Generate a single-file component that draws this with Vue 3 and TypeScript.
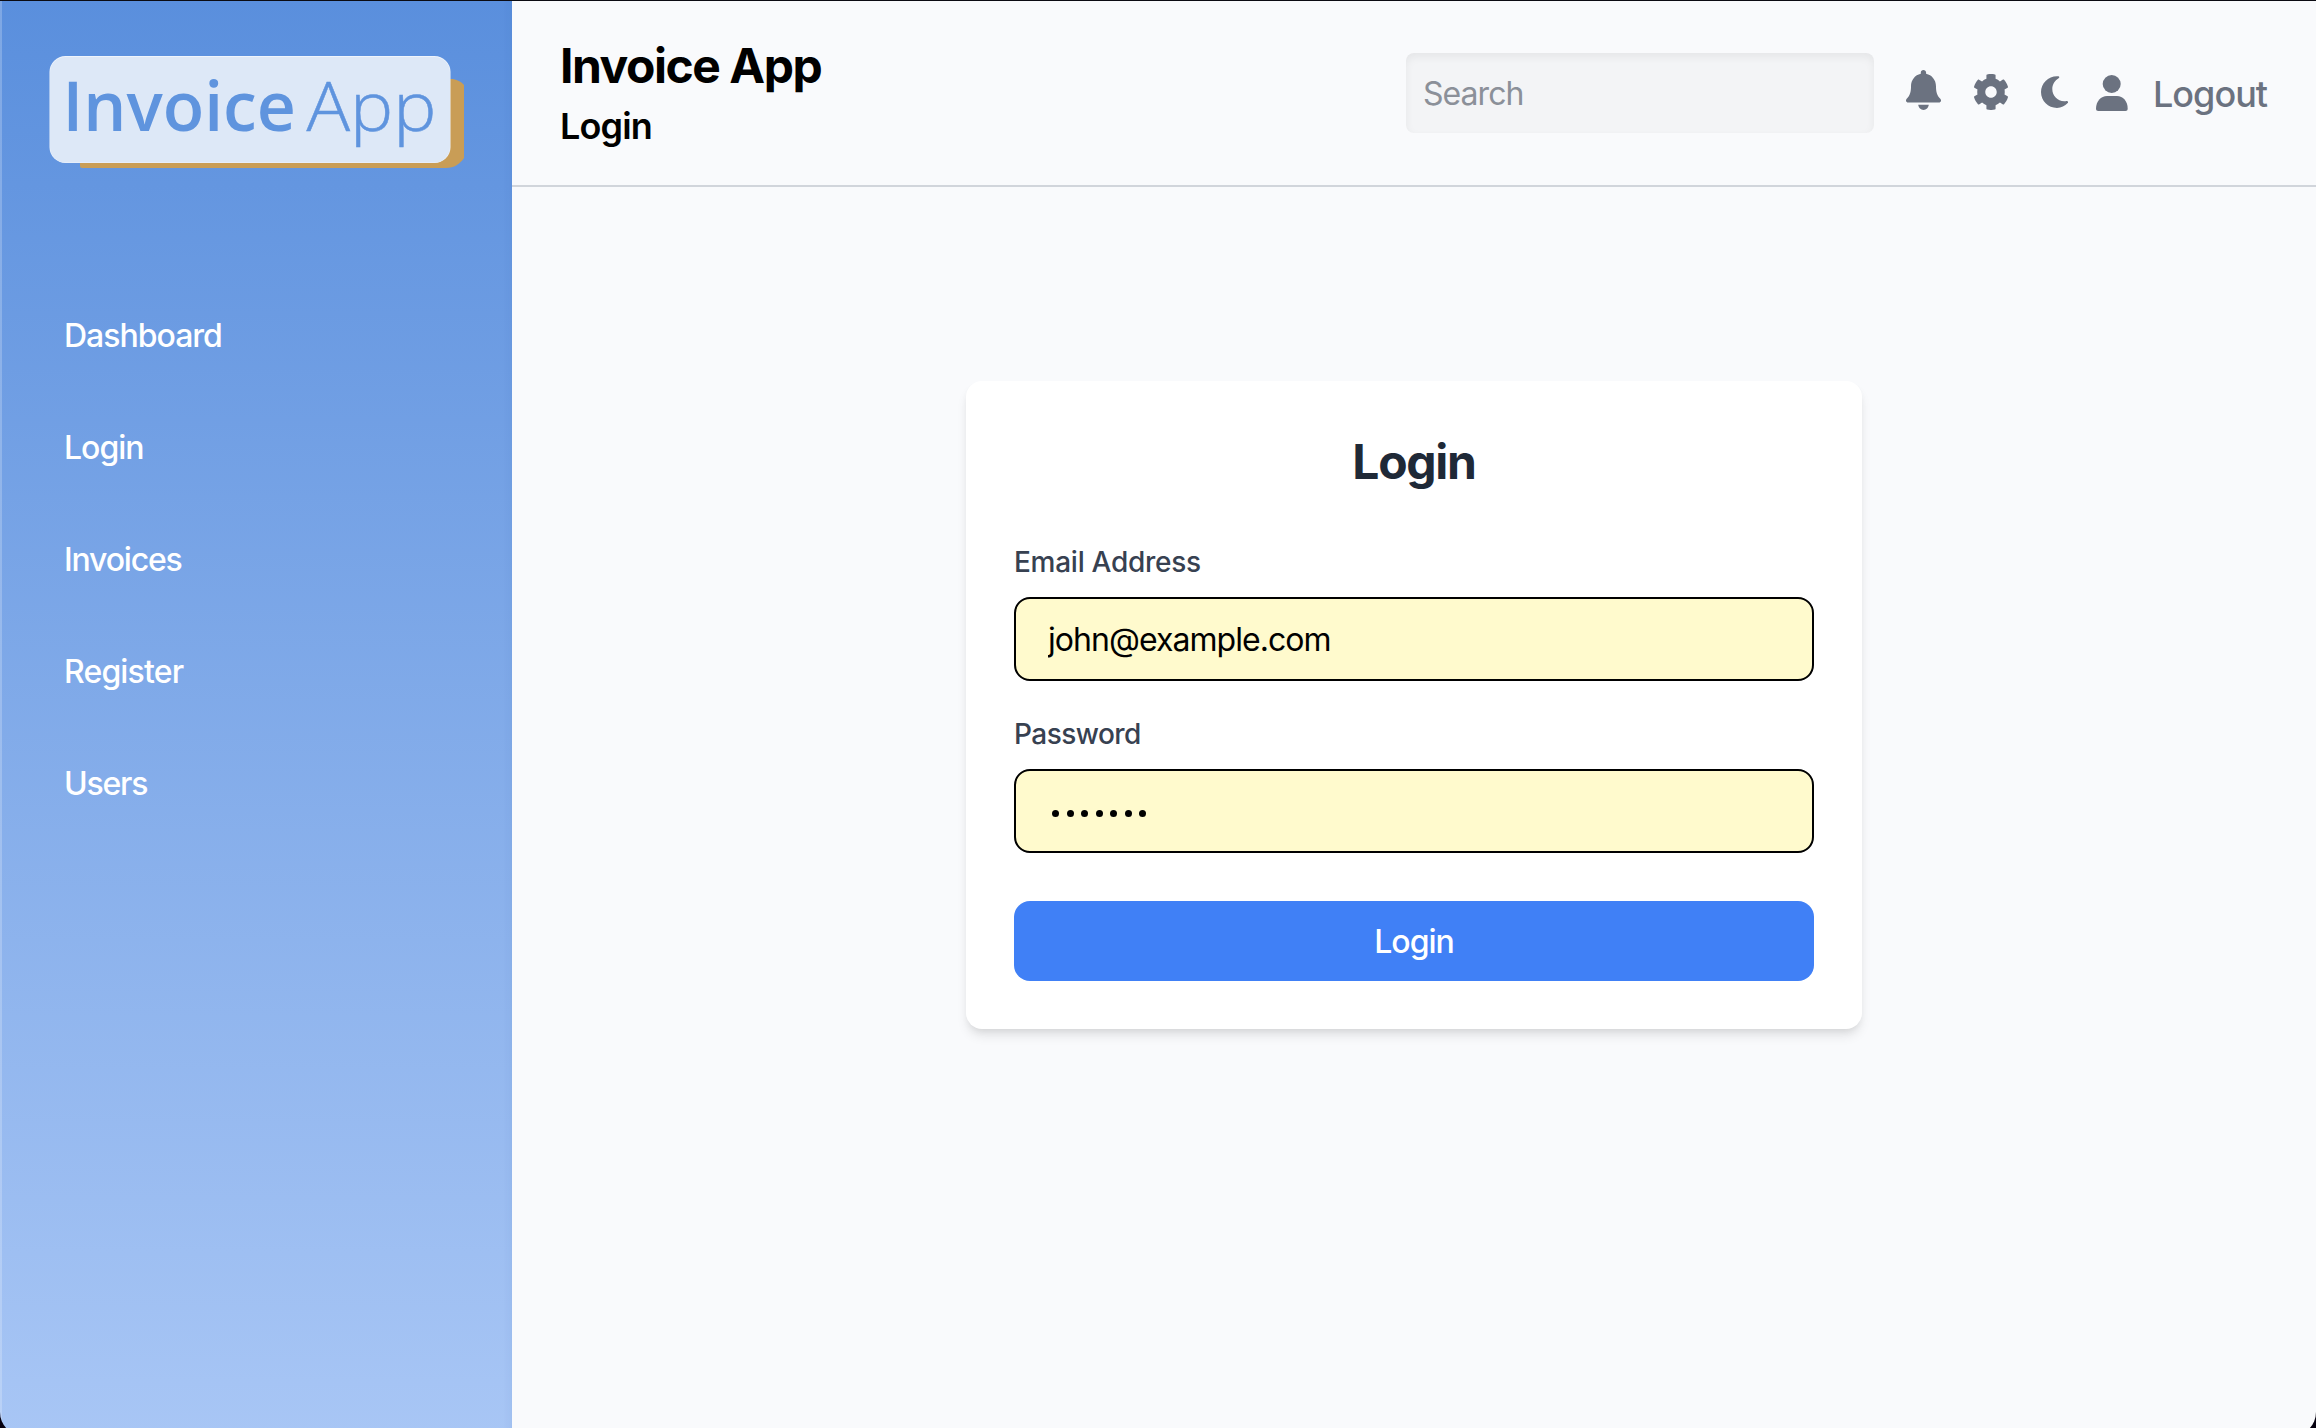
<script setup lang="ts">
import { ref } from 'vue'

interface NavItem {
  label: string
  key: string
}

const navItems: NavItem[] = [
  { label: 'Dashboard', key: 'dashboard' },
  { label: 'Login', key: 'login' },
  { label: 'Invoices', key: 'invoices' },
  { label: 'Register', key: 'register' },
  { label: 'Users', key: 'users' },
]

const search = ref('')
const email = ref('john@example.com')
const passwordLength = 7
</script>

<template>
  <div class="window">
    <div class="frame">
      <aside class="sidebar">
        <svg class="logo" width="414" height="112" viewBox="0 0 414 112">
          <path
            d="M32 23H401C406 23 411 25.500 414 29V102C410 108 404 112 396 112H32Q30 112 30 110V25Q30 23 32 23Z"
            fill="#c99d56"
          />
          <rect x="-0.500" y="0" width="401" height="107" rx="16" fill="#eef4fc" />
          <rect x="0" y="1" width="400" height="105.500" rx="15.500" fill="#dde8f7" />
          <text class="logo-bold" x="12.500" y="74.500" textLength="233.500" lengthAdjust="spacingAndGlyphs">Invoice</text>
          <text class="logo-light" x="256.500" y="74.500" textLength="130" lengthAdjust="spacingAndGlyphs">App</text>
        </svg>
        <nav class="nav">
          <a v-for="item in navItems" :key="item.key" class="nav-item" :class="item.key">{{ item.label }}</a>
        </nav>
      </aside>

      <div class="content">
        <header class="header">
          <div class="titles">
            <h1>Invoice App</h1>
            <h2>Login</h2>
          </div>
          <div class="actions">
            <input v-model="search" class="search" type="text" placeholder="Search" />
            <svg class="icon bell" width="35" height="40" viewBox="0 0 35 40">
              <path
                d="M17.400 0c-1.500 0-2.600 1.100-2.600 2.500v1.200C9 4.900 5 10 5 16.200c0 5.500-.9 9-4.300 12.600-1.500 1.600-.6 3.600 1.500 3.600h30.600c2.100 0 3-2 1.500-3.600C30.900 25.200 30 21.700 30 16.200 30 10 25.900 4.900 20.100 3.700V2.500C20.100 1.100 18.900 0 17.400 0z"
              />
              <path d="M12.200 34.800h10.600c-.4 3-2.600 5.200-5.300 5.200s-4.900-2.200-5.300-5.200z" />
            </svg>
            <svg class="icon gear" width="34" height="36" viewBox="18.600 8 474.800 496" preserveAspectRatio="none">
              <path
                d="M487.400 315.700l-42.600-24.600c4.300-23.200 4.300-47 0-70.200l42.600-24.600c4.900-2.800 7.100-8.600 5.500-14-11.100-35.600-30-67.800-54.700-94.600-3.800-4.100-10-5.100-14.800-2.300L380.800 110c-17.900-15.400-38.500-27.300-60.800-35.100V25.800c0-5.600-3.900-10.500-9.400-11.700-36.700-8.200-74.300-7.800-109.200 0-5.500 1.200-9.400 6.100-9.400 11.700V75c-22.200 7.900-42.800 19.800-60.800 35.100L88.600 85.500c-4.900-2.800-11-1.900-14.800 2.300-24.700 26.700-43.600 58.900-54.700 94.600-1.700 5.400.6 11.200 5.500 14L67.200 221c-4.300 23.200-4.300 47 0 70.200l-42.600 24.600c-4.900 2.800-7.100 8.600-5.500 14 11.100 35.600 30 67.800 54.700 94.600 3.800 4.100 10 5.100 14.800 2.300l42.600-24.600c17.900 15.400 38.500 27.300 60.800 35.100v49.200c0 5.600 3.900 10.500 9.400 11.700 36.700 8.200 74.300 7.800 109.200 0 5.500-1.200 9.400-6.100 9.400-11.700v-49.200c22.200-7.900 42.800-19.800 60.800-35.100l42.600 24.600c4.900 2.800 11 1.900 14.800-2.300 24.700-26.700 43.600-58.900 54.700-94.600 1.500-5.500-.7-11.300-5.600-14.100zM256 336c-44.100 0-80-35.900-80-80s35.900-80 80-80 80 35.900 80 80-35.900 80-80 80z"
              />
            </svg>
            <svg class="icon moon" width="27" height="32" viewBox="0 0 27 32">
              <path
                d="M16 .2C7.100.2 0 7.300 0 16.100S7.100 32 16 32c4.200 0 7.900-1.800 10.700-4.900.9-1 .2-2.200-1.100-2C17.600 26.500 11.300 20.500 11.300 13.100c0-4.600 2.500-8.600 6.300-10.800C18.700 1.600 18.400.4 17.300.3 16.900.2 16.400.2 16 .2z"
              />
            </svg>
            <svg class="icon user" width="32" height="36" viewBox="0 0 32 36">
              <circle cx="15.700" cy="9" r="9" />
              <path d="M11 21h10c6 0 10.700 5.200 10.700 12.700 0 1.300-1 2.300-2.200 2.300H2.200C1 36 0 35 0 33.700 0 26.200 5 21 11 21z" />
            </svg>
            <a class="logout">Logout</a>
          </div>
        </header>

        <main class="main">
          <form class="card" @submit.prevent>
            <h3>Login</h3>
            <label class="email-label">Email Address</label>
            <input v-model="email" class="field email" type="text" />
            <label class="password-label">Password</label>
            <div class="field password">
              <i v-for="n in passwordLength" :key="n" class="dot"></i>
            </div>
            <button type="submit">Login</button>
          </form>
        </main>
      </div>
    </div>
  </div>
</template>

<style>
body {
  background: #000;
}
</style>

<style scoped>
.window {
  width: 2316px;
  height: 1428px;
  overflow: hidden;
  background: #05000f;
  font-family: Inter, "Liberation Sans", sans-serif;
}

.frame {
  display: flex;
  height: 1436px;
  border-top: 1px solid #0b0b12;
  border-radius: 0 0 24px 24px;
  box-sizing: border-box;
  overflow: hidden;
}

.sidebar {
  width: 512px;
  flex: none;
  box-sizing: border-box;
  padding: 55px 0 0 48px;
  border-left: 2px solid rgba(255, 255, 255, 0.22);
  background: linear-gradient(180deg, #5a8fdd 0%, #a8c6f5 100%) border-box;
  box-shadow: inset -10px 0 10px -10px rgba(40, 80, 140, 0.1);
}

.logo {
  display: block;
  overflow: visible;
}

.logo text {
  font-family: "Open Sans", "Noto Sans", sans-serif;
  font-size: 68px;
  fill: #5f94de;
}

.logo .logo-bold {
  font-weight: 600;
}

.logo .logo-light {
  font-weight: 300;
  stroke: #5f94de;
  stroke-width: 0.5px;
}

.nav {
  display: flex;
  flex-direction: column;
  padding: 112px 0 0 14px;
}

.nav-item {
  padding: 32px 0;
  font-size: 32px;
  font-weight: 450;
  line-height: 48px;
  letter-spacing: -1px;
  color: #fff;
}

.nav-item.invoices,
.nav-item.users {
  letter-spacing: -1.2px;
}

.nav-item.register {
  letter-spacing: -0.85px;
}

.content {
  flex: 1;
  background: #f9fafc;
}

.header {
  display: flex;
  justify-content: space-between;
  align-items: center;
  height: 186px;
  box-sizing: border-box;
  padding: 0 48px;
  border-bottom: 2px solid #d1d5db;
}

.titles {
  padding-top: 2px;
}

h1,
h2,
h3 {
  margin: 0;
}

h1 {
  font-size: 48px;
  line-height: 64px;
  font-weight: 700;
  letter-spacing: -1.47px;
  color: #000;
}

h2 {
  font-size: 36px;
  line-height: 56px;
  font-weight: 600;
  letter-spacing: -0.88px;
  color: #000;
}

.actions {
  display: flex;
  align-items: flex-start;
  height: 80px;
}

.search {
  width: 468px;
  height: 80px;
  box-sizing: border-box;
  padding: 0 16px 0 17px;
  border: 0;
  border-radius: 8px;
  outline: none;
  background: #f3f4f6;
  box-shadow: inset 0 4px 8px rgba(0, 0, 0, 0.06);
  font: 400 32px/48px Inter, "Liberation Sans", sans-serif;
  letter-spacing: -0.95px;
}

.search::placeholder {
  color: #8b9099;
  opacity: 1;
}

.icon {
  display: block;
  flex: none;
  fill: #6b7280;
}

.bell {
  margin: 17px 0 0 32px;
}

.gear {
  margin: 21px 0 0 33px;
}

.moon {
  margin: 23px 0 0 33px;
}

.user {
  margin: 22px 0 0 28px;
}

.logout {
  width: 115px;
  margin: 13px 0 0 25px;
  font-size: 36px;
  line-height: 56px;
  font-weight: 500;
  letter-spacing: -1px;
  color: #6b7280;
}

.main {
  display: flex;
  justify-content: center;
  padding-top: 194px;
}

.card {
  display: flex;
  flex-direction: column;
  width: 896px;
  height: 648px;
  box-sizing: border-box;
  padding: 49px 48px 48px;
  border-radius: 16px;
  background: #fff;
  box-shadow: 0 8px 12px -2px rgba(0, 0, 0, 0.1), 0 4px 8px -4px rgba(0, 0, 0, 0.1);
}

h3 {
  margin-bottom: 48px;
  font-size: 48px;
  line-height: 64px;
  font-weight: 700;
  letter-spacing: -1.3px;
  text-align: center;
  color: #1f2937;
}

label {
  margin-bottom: 15px;
  font-size: 28px;
  line-height: 40px;
  font-weight: 500;
  color: #374151;
}

.email-label {
  letter-spacing: -0.27px;
}

.password-label {
  letter-spacing: -0.55px;
}

.field {
  height: 84px;
  box-sizing: border-box;
  border: 2px solid #000;
  border-radius: 16px;
  outline: none;
  background: #fffacd;
}

.email {
  margin: 0 0 33px;
  padding: 0 32px;
  font: 400 32px/48px Inter, "Liberation Sans", sans-serif;
  letter-spacing: -0.95px;
  color: #000;
}

.password {
  display: flex;
  align-items: center;
  gap: 7.500px;
  margin-bottom: 48px;
  padding: 5px 36px 0;
}

.dot {
  width: 7px;
  height: 7px;
  border-radius: 50%;
  background: #000;
}

button {
  height: 80px;
  padding: 2px 0 0;
  border: 0;
  border-radius: 16px;
  background: #4080f6;
  font: 450 32px/48px Inter, "Liberation Sans", sans-serif;
  letter-spacing: -1.05px;
  color: #fff;
}
</style>
